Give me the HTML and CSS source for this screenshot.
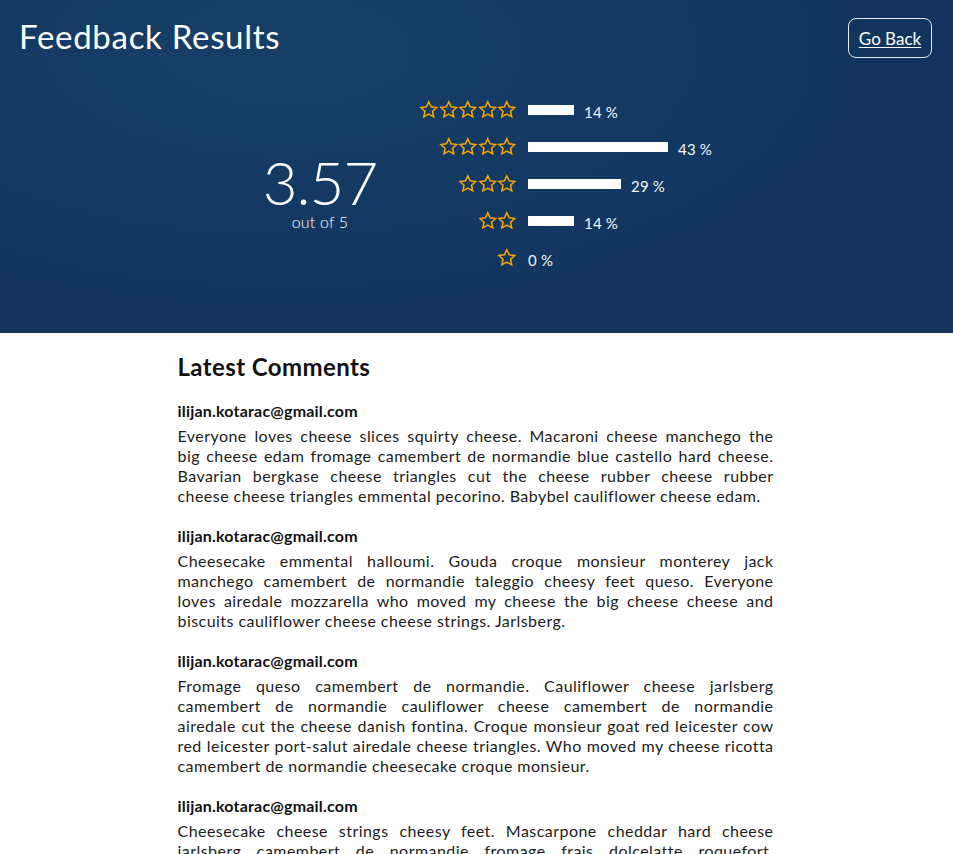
FILE: index.html
```html
<!DOCTYPE html>
<html lang="en">
<head>
<meta charset="utf-8">
<title>Feedback Results</title>
<link rel="stylesheet" href="styles.css">
</head>
<body>
<header class="hero">
  <div class="topbar">
    <h1 class="title">Feedback Results</h1>
    <a class="back" href="#">Go Back</a>
  </div>
  <div class="summary">
    <div class="score">
      <div class="score-value">3.57</div>
      <div class="score-sub">out of 5</div>
    </div>
    <div class="ratings">
      <div class="stars">
        <svg class="star" viewBox="0 0 24 24"><polygon points="12,2.2 14.9,8.4 21.6,9.2 16.6,13.8 18,20.6 12,17.2 6,20.6 7.4,13.8 2.4,9.2 9.1,8.4"/></svg>
        <svg class="star" viewBox="0 0 24 24"><polygon points="12,2.2 14.9,8.4 21.6,9.2 16.6,13.8 18,20.6 12,17.2 6,20.6 7.4,13.8 2.4,9.2 9.1,8.4"/></svg>
        <svg class="star" viewBox="0 0 24 24"><polygon points="12,2.2 14.9,8.4 21.6,9.2 16.6,13.8 18,20.6 12,17.2 6,20.6 7.4,13.8 2.4,9.2 9.1,8.4"/></svg>
        <svg class="star" viewBox="0 0 24 24"><polygon points="12,2.2 14.9,8.4 21.6,9.2 16.6,13.8 18,20.6 12,17.2 6,20.6 7.4,13.8 2.4,9.2 9.1,8.4"/></svg>
        <svg class="star" viewBox="0 0 24 24"><polygon points="12,2.2 14.9,8.4 21.6,9.2 16.6,13.8 18,20.6 12,17.2 6,20.6 7.4,13.8 2.4,9.2 9.1,8.4"/></svg>
      </div>
      <div class="barcell"><span class="bar" style="width:46px"></span><span class="pct">14 %</span></div>

      <div class="stars">
        <svg class="star" viewBox="0 0 24 24"><polygon points="12,2.2 14.9,8.4 21.6,9.2 16.6,13.8 18,20.6 12,17.2 6,20.6 7.4,13.8 2.4,9.2 9.1,8.4"/></svg>
        <svg class="star" viewBox="0 0 24 24"><polygon points="12,2.2 14.9,8.4 21.6,9.2 16.6,13.8 18,20.6 12,17.2 6,20.6 7.4,13.8 2.4,9.2 9.1,8.4"/></svg>
        <svg class="star" viewBox="0 0 24 24"><polygon points="12,2.2 14.9,8.4 21.6,9.2 16.6,13.8 18,20.6 12,17.2 6,20.6 7.4,13.8 2.4,9.2 9.1,8.4"/></svg>
        <svg class="star" viewBox="0 0 24 24"><polygon points="12,2.2 14.9,8.4 21.6,9.2 16.6,13.8 18,20.6 12,17.2 6,20.6 7.4,13.8 2.4,9.2 9.1,8.4"/></svg>
      </div>
      <div class="barcell"><span class="bar" style="width:140px"></span><span class="pct">43 %</span></div>

      <div class="stars">
        <svg class="star" viewBox="0 0 24 24"><polygon points="12,2.2 14.9,8.4 21.6,9.2 16.6,13.8 18,20.6 12,17.2 6,20.6 7.4,13.8 2.4,9.2 9.1,8.4"/></svg>
        <svg class="star" viewBox="0 0 24 24"><polygon points="12,2.2 14.9,8.4 21.6,9.2 16.6,13.8 18,20.6 12,17.2 6,20.6 7.4,13.8 2.4,9.2 9.1,8.4"/></svg>
        <svg class="star" viewBox="0 0 24 24"><polygon points="12,2.2 14.9,8.4 21.6,9.2 16.6,13.8 18,20.6 12,17.2 6,20.6 7.4,13.8 2.4,9.2 9.1,8.4"/></svg>
      </div>
      <div class="barcell"><span class="bar" style="width:93px"></span><span class="pct">29 %</span></div>

      <div class="stars">
        <svg class="star" viewBox="0 0 24 24"><polygon points="12,2.2 14.9,8.4 21.6,9.2 16.6,13.8 18,20.6 12,17.2 6,20.6 7.4,13.8 2.4,9.2 9.1,8.4"/></svg>
        <svg class="star" viewBox="0 0 24 24"><polygon points="12,2.2 14.9,8.4 21.6,9.2 16.6,13.8 18,20.6 12,17.2 6,20.6 7.4,13.8 2.4,9.2 9.1,8.4"/></svg>
      </div>
      <div class="barcell"><span class="bar" style="width:46px"></span><span class="pct">14 %</span></div>

      <div class="stars">
        <svg class="star" viewBox="0 0 24 24"><polygon points="12,2.2 14.9,8.4 21.6,9.2 16.6,13.8 18,20.6 12,17.2 6,20.6 7.4,13.8 2.4,9.2 9.1,8.4"/></svg>
      </div>
      <div class="barcell"><span class="pct">0 %</span></div>
    </div>
  </div>
</header>

<main class="comments">
  <h2 class="comments-title">Latest Comments</h2>

  <article class="comment">
    <div class="author">ilijan.kotarac@gmail.com</div>
    <p class="text">
      <span class="ln">Everyone loves cheese slices squirty cheese. Macaroni cheese manchego the</span>
      <span class="ln">big cheese edam fromage camembert de normandie blue castello hard cheese.</span>
      <span class="ln">Bavarian bergkase cheese triangles cut the cheese rubber cheese rubber</span>
      <span class="ln last">cheese cheese triangles emmental pecorino. Babybel cauliflower cheese edam.</span>
    </p>
  </article>

  <article class="comment">
    <div class="author">ilijan.kotarac@gmail.com</div>
    <p class="text">
      <span class="ln">Cheesecake emmental halloumi. Gouda croque monsieur monterey jack</span>
      <span class="ln">manchego camembert de normandie taleggio cheesy feet queso. Everyone</span>
      <span class="ln">loves airedale mozzarella who moved my cheese the big cheese cheese and</span>
      <span class="ln last">biscuits cauliflower cheese cheese strings. Jarlsberg.</span>
    </p>
  </article>

  <article class="comment">
    <div class="author">ilijan.kotarac@gmail.com</div>
    <p class="text">
      <span class="ln">Fromage queso camembert de normandie. Cauliflower cheese jarlsberg</span>
      <span class="ln">camembert de normandie cauliflower cheese camembert de normandie</span>
      <span class="ln">airedale cut the cheese danish fontina. Croque monsieur goat red leicester cow</span>
      <span class="ln">red leicester port-salut airedale cheese triangles. Who moved my cheese ricotta</span>
      <span class="ln last">camembert de normandie cheesecake croque monsieur.</span>
    </p>
  </article>

  <article class="comment">
    <div class="author">ilijan.kotarac@gmail.com</div>
    <p class="text">
      <span class="ln">Cheesecake cheese strings cheesy feet. Mascarpone cheddar hard cheese</span>
      <span class="ln">jarlsberg camembert de normandie fromage frais dolcelatte roquefort.</span>
      <span class="ln last">Cheese and wine boursin rubber cheese.</span>
    </p>
  </article>
</main>
</body>
</html>
```

FILE: styles.css
```css
* { box-sizing: border-box; }

html, body {
  margin: 0;
  padding: 0;
  background: #ffffff;
}

body {
  font-family: "Lato", "Open Sans", "Liberation Sans", sans-serif;
  color: #161616;
}

.hero {
  background: radial-gradient(ellipse 70% 90% at 30% 15%, #163f68 0%, #143a63 45%, #12345d 100%);
  color: #ffffff;
  height: 333px;
  padding: 18px 21px 0 19px;
}

.topbar {
  display: flex;
  justify-content: space-between;
  align-items: center;
  height: 40px;
}

.title {
  margin: -4px 0 0 0;
  font-size: 33px;
  font-weight: 400;
  line-height: 38px;
  letter-spacing: 0.7px;
}

.back {
  display: flex;
  align-items: center;
  justify-content: center;
  width: 84px;
  height: 40px;
  border: 1px solid #e6e9ef;
  border-radius: 8px;
  color: #ffffff;
  font-size: 17px;
  text-decoration: underline;
  text-underline-offset: 2px;
  text-decoration-thickness: 1px;
}

.summary {
  display: flex;
  justify-content: center;
  align-items: center;
  margin-top: 33px;
  margin-left: -19px;
  margin-right: -21px;
}

.score {
  width: 160px;
  display: flex;
  flex-direction: column;
  align-items: center;
  margin-top: 16px;
}

.score-value {
  font-size: 60px;
  font-weight: 300;
  line-height: 60px;
  letter-spacing: -1px;
}

.score-sub {
  font-size: 16px;
  line-height: 20px;
  font-weight: 300;
  letter-spacing: 0.2px;
}

.ratings {
  display: grid;
  grid-template-columns: 117px 185px;
  grid-auto-rows: 37px;
  column-gap: 11px;
  align-items: center;
}

.stars {
  display: flex;
  justify-content: flex-end;
  align-items: center;
}

.star {
  width: 19.6px;
  height: 19.6px;
  fill: none;
  stroke: #f7a400;
  stroke-width: 1.9;
  stroke-linejoin: miter;
}

.barcell {
  display: flex;
  align-items: center;
}

.bar {
  display: block;
  height: 10px;
  background: #ffffff;
  margin-right: 10px;
}

.pct {
  font-size: 15px;
  font-weight: 400;
  color: #f2f5f9;
  padding-top: 4px;
  letter-spacing: 0.2px;
}

.comments {
  width: 598px;
  margin: 0 auto;
  padding: 19px 2px 40px 0;
}

.comments-title {
  margin: 0 0 20px;
  font-size: 24px;
  line-height: 29px;
  font-weight: 700;
  letter-spacing: 0.4px;
  color: #111;
}

.comment {
  margin-bottom: 20px;
}

.author {
  font-size: 16px;
  line-height: 20px;
  font-weight: 700;
  letter-spacing: 0.2px;
  color: #111;
}

.text {
  margin: 5px 0 0;
  font-size: 16px;
  line-height: 20px;
  letter-spacing: 0.45px;
  color: #1c1c1c;
}

.ln {
  display: block;
  text-align: justify;
  text-align-last: justify;
  white-space: nowrap;
}

.ln.last {
  text-align-last: left;
}
```
